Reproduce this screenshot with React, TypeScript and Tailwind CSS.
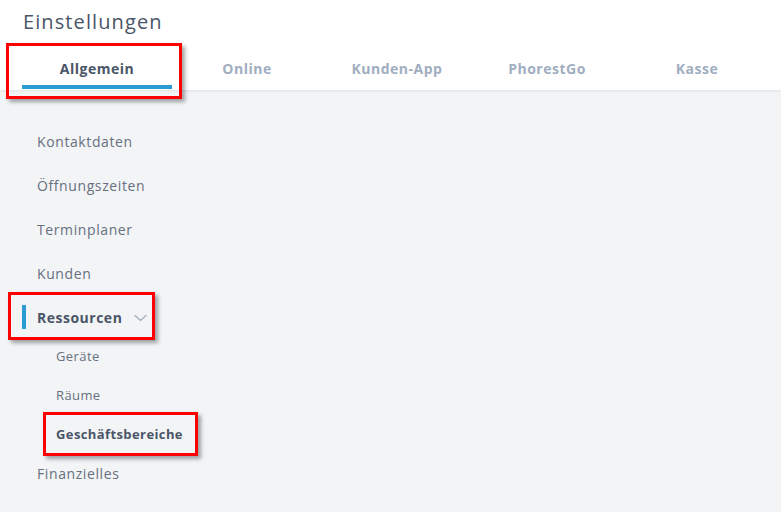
import React from "react";

const tabs = ["Allgemein", "Online", "Kunden-App", "PhorestGo", "Kasse"];

function RedBox({ className }: { className: string }) {
  return (
    <div
      className={`pointer-events-none absolute border-[3px] border-[#ff0000] shadow-[3px_3px_4px_rgba(0,0,0,0.35)] ${className}`}
    />
  );
}

export default function App() {
  return (
    <div
      className="relative h-[512px] w-[781px] overflow-hidden bg-[#f3f4f6]"
      style={{ fontFamily: "'Open Sans', 'Liberation Sans', sans-serif" }}
    >
      <header className="h-[90px] bg-white shadow-[0_1px_3px_rgba(0,0,0,0.08)]">
        <h1 className="pl-[23px] pt-[8px] text-[20px] leading-[28px] font-medium tracking-[1.1px] text-[#4a5568]">
          Einstellungen
        </h1>
        <nav className="flex pl-[22px] pt-[23px]">
          {tabs.map((t, i) => (
            <div key={t} className="flex w-[150px] flex-col items-center">
              <span
                className={`text-[14px] leading-[20px] font-bold tracking-[0.5px] ${
                  i === 0 ? "text-[#4a5568]" : "text-[#a0aec0]"
                }`}
              >
                {t}
              </span>
              <div
                className={`mt-[6px] h-[4px] w-full ${
                  i === 0 ? "bg-[#2b9bd3]" : "bg-transparent"
                }`}
              />
            </div>
          ))}
        </nav>
      </header>

      <ul className="pt-[29px] text-[14px] tracking-[0.6px] text-[#667080]">
        <li className="flex h-[44px] items-center pl-[37px]">Kontaktdaten</li>
        <li className="flex h-[44px] items-center pl-[37px]">Öffnungszeiten</li>
        <li className="flex h-[44px] items-center pl-[37px]">Terminplaner</li>
        <li className="flex h-[44px] items-center pl-[37px]">Kunden</li>
        <li className="relative flex h-[44px] items-center pl-[37px] font-bold tracking-[0.5px] text-[#4a5568]">
          <span className="absolute left-[22px] top-[10px] h-[24px] w-[4px] bg-[#2b9bd3]" />
          Ressourcen
          <svg
            className="ml-[12px] mt-[1px]"
            width="13"
            height="8"
            viewBox="0 0 13 8"
            fill="none"
            stroke="#a9b3c2"
            strokeWidth="1.5"
            strokeLinecap="round"
            strokeLinejoin="round"
          >
            <path d="M1 1.5l5.5 5 5.5-5" />
          </svg>
        </li>
        <li className="-mt-[2px] flex h-[39px] items-center pl-[56px] text-[13px] tracking-[0.4px]">
          Geräte
        </li>
        <li className="flex h-[39px] items-center pl-[56px] text-[13px] tracking-[0.4px]">Räume</li>
        <li className="flex h-[39px] items-center pl-[56px] text-[13px] font-bold tracking-[0.4px] text-[#4a5568]">
          Geschäftsbereiche
        </li>
        <li className="flex h-[38px] items-center pl-[37px]">Finanzielles</li>
      </ul>

      <RedBox className="left-[6px] top-[43px] h-[56px] w-[176px]" />
      <RedBox className="left-[8px] top-[292px] h-[48px] w-[147px]" />
      <RedBox className="left-[43px] top-[412px] h-[44px] w-[155px]" />
    </div>
  );
}
